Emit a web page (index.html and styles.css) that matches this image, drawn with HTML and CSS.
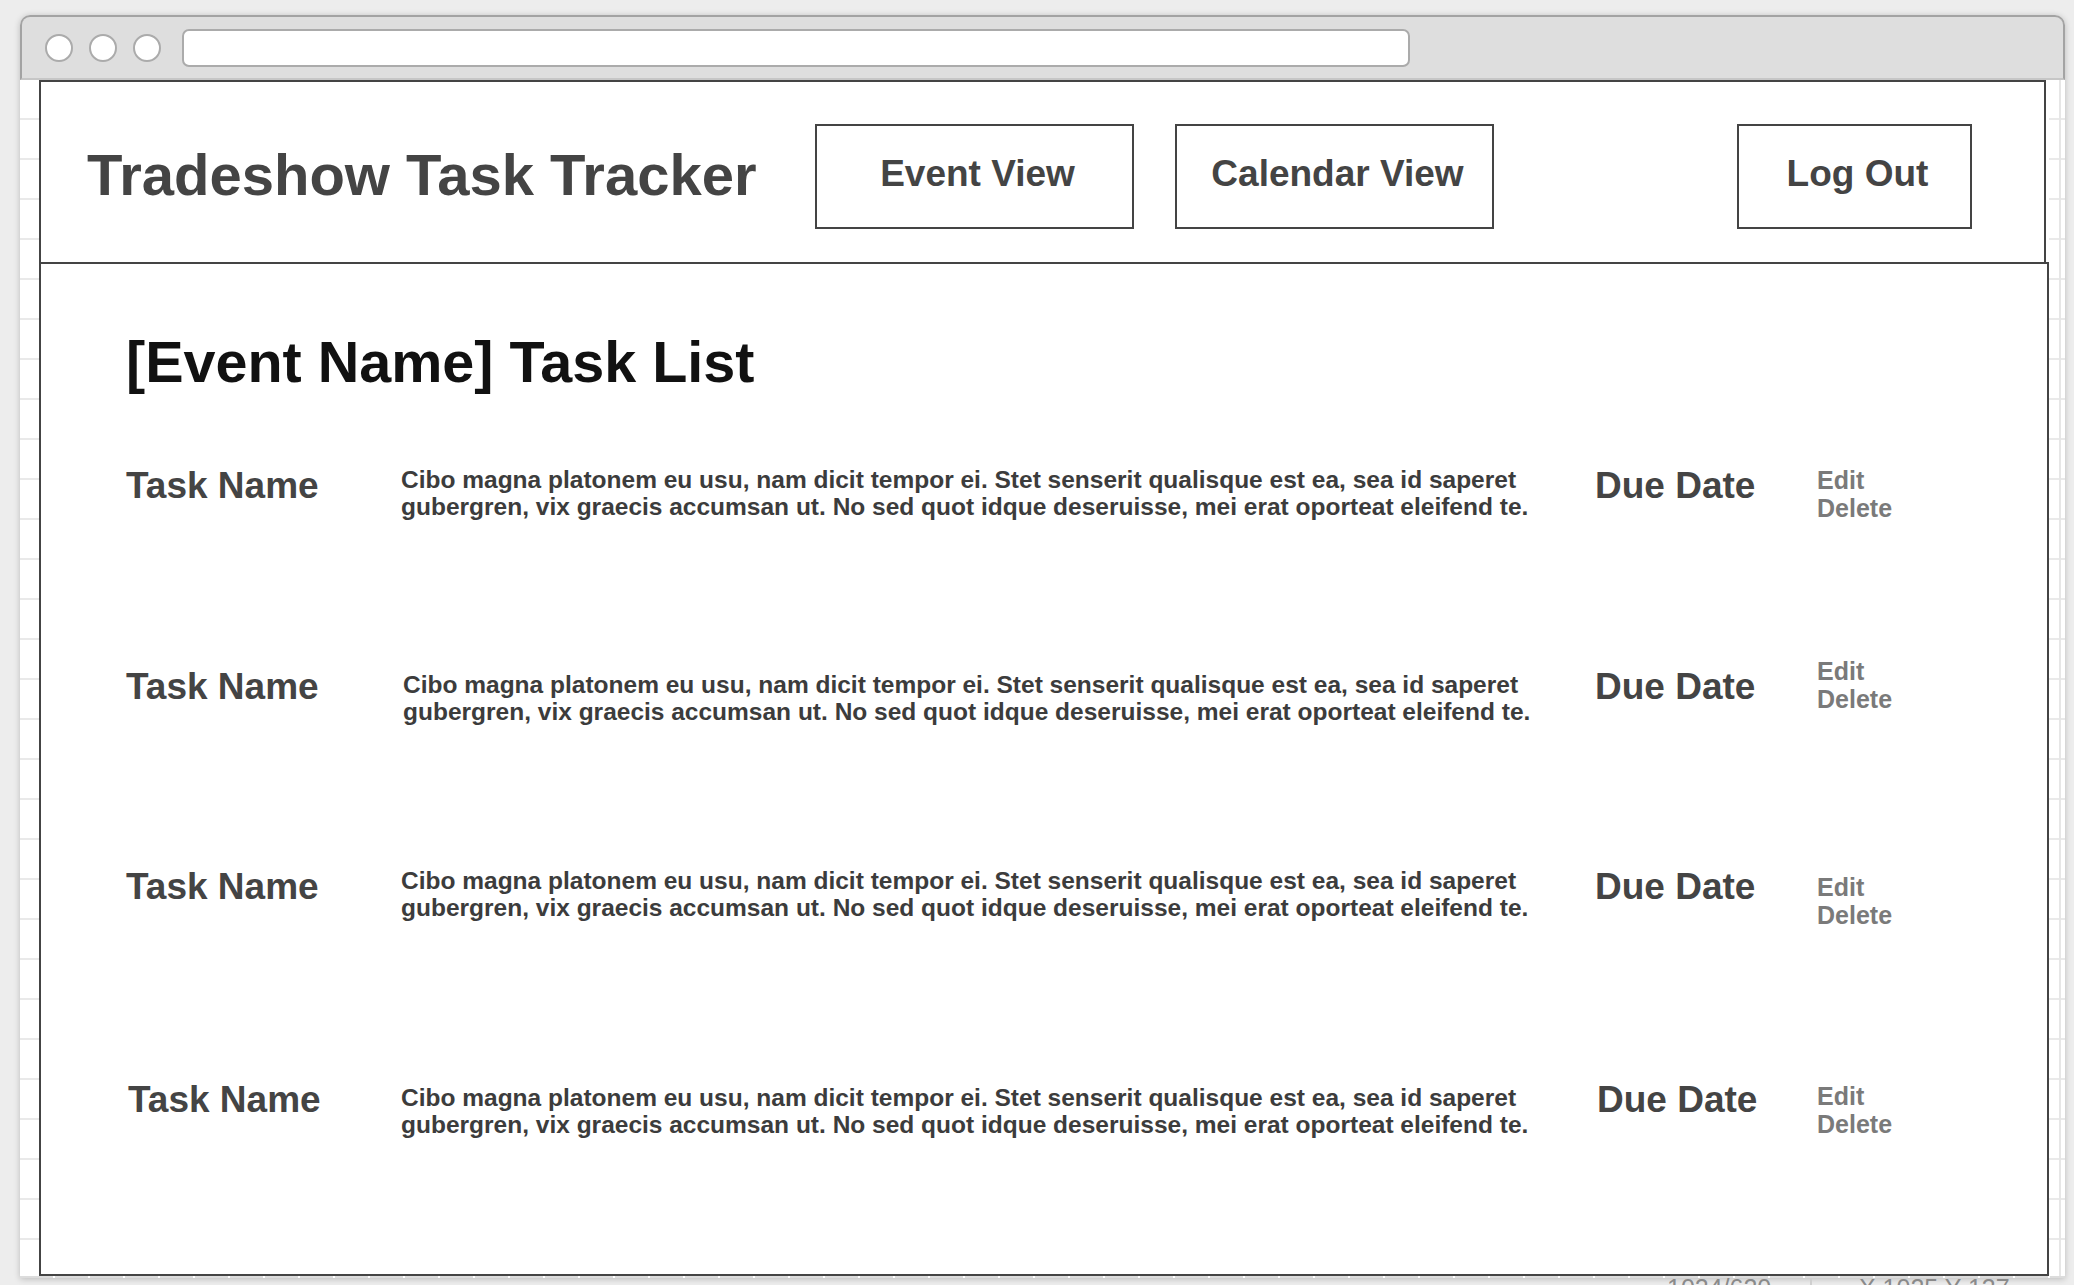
FILE: index.html
```html
<!DOCTYPE html>
<html lang="en">
<head>
<meta charset="utf-8">
<title>Tradeshow Task Tracker</title>
<link rel="stylesheet" href="styles.css">
</head>
<body>
<div class="window">
  <div class="titlebar">
    <span class="dot"></span>
    <span class="dot"></span>
    <span class="dot"></span>
    <div class="urlbar"></div>
  </div>
  <div class="viewport">
    <div class="gutter gutter-left"></div>
    <div class="app">
      <header class="app-header">
        <h1 class="brand">Tradeshow Task Tracker</h1>
        <nav class="nav">
          <a class="btn btn-view">Event View</a>
          <a class="btn btn-view btn-calendar">Calendar View</a>
        </nav>
        <a class="btn btn-logout">Log Out</a>
      </header>
      <main class="app-main">
        <h2 class="page-title">[Event Name] Task List</h2>
        <ul class="tasks">
          <li class="task">
            <div class="task-name">Task Name</div>
            <p class="task-desc">Cibo magna platonem eu usu, nam dicit tempor ei. Stet senserit qualisque est ea, sea id saperet gubergren, vix graecis accumsan ut. No sed quot idque deseruisse, mei erat oporteat eleifend te.</p>
            <div class="task-due">Due Date</div>
            <div class="task-actions"><a>Edit</a><a>Delete</a></div>
          </li>
          <li class="task">
            <div class="task-name">Task Name</div>
            <p class="task-desc">Cibo magna platonem eu usu, nam dicit tempor ei. Stet senserit qualisque est ea, sea id saperet gubergren, vix graecis accumsan ut. No sed quot idque deseruisse, mei erat oporteat eleifend te.</p>
            <div class="task-due">Due Date</div>
            <div class="task-actions"><a>Edit</a><a>Delete</a></div>
          </li>
          <li class="task">
            <div class="task-name">Task Name</div>
            <p class="task-desc">Cibo magna platonem eu usu, nam dicit tempor ei. Stet senserit qualisque est ea, sea id saperet gubergren, vix graecis accumsan ut. No sed quot idque deseruisse, mei erat oporteat eleifend te.</p>
            <div class="task-due">Due Date</div>
            <div class="task-actions"><a>Edit</a><a>Delete</a></div>
          </li>
          <li class="task">
            <div class="task-name">Task Name</div>
            <p class="task-desc">Cibo magna platonem eu usu, nam dicit tempor ei. Stet senserit qualisque est ea, sea id saperet gubergren, vix graecis accumsan ut. No sed quot idque deseruisse, mei erat oporteat eleifend te.</p>
            <div class="task-due">Due Date</div>
            <div class="task-actions"><a>Edit</a><a>Delete</a></div>
          </li>
        </ul>
      </main>
    </div>
    <div class="gutter gutter-right"></div>
  </div>
  <div class="ruler"></div>
</div>
<div class="status">
  <span class="status-size">1024/620</span>
  <span class="status-pos">X 1025 Y 137</span>
</div>
</body>
</html>
```
FILE: styles.css
```css
* { box-sizing: border-box; }

html, body {
  margin: 0;
  padding: 0;
}

body {
  height: 1285px;
  overflow: hidden;
  background: #ededed;
  font-family: "Liberation Sans", Arial, sans-serif;
  padding-top: 15px;
}

.window {
  margin-left: 20px;
  width: 2045px;
  box-shadow: 0 1px 6px rgba(0, 0, 0, 0.22);
  background: #fff;
  border-radius: 10px 10px 0 0;
}

.titlebar {
  height: 65px;
  display: flex;
  align-items: center;
  background: #dedede;
  border: 2px solid #a3a3a3;
  border-bottom-color: #c6c6c6;
  border-radius: 10px 10px 0 0;
  padding-left: 23px;
}

.dot {
  width: 28px;
  height: 28px;
  border-radius: 50%;
  background: #fff;
  border: 2px solid #ababab;
  margin-right: 16px;
  flex: none;
}

.dot:nth-child(3) { margin-right: 21px; }

.urlbar {
  width: 1228px;
  height: 38px;
  background: #fff;
  border: 2px solid #ababab;
  border-radius: 7px;
}

.viewport {
  display: flex;
  height: 1196px;
}

.gutter {
  background-color: #fff;
  background-image: repeating-linear-gradient(to bottom, transparent 0 38px, #e9e9e9 38px 40px);
}

.gutter-left { width: 19px; flex: none; }

.gutter-right {
  width: 16px;
  flex: none;
  background-image:
    linear-gradient(to right, transparent 10px, #e6e6e6 10px 12px, transparent 12px),
    repeating-linear-gradient(to bottom, transparent 0 38px, #e9e9e9 38px 40px);
}

.app {
  width: 2010px;
  flex: none;
  display: flex;
  flex-direction: column;
}

.app-header {
  flex: none;
  height: 182px;
  margin-right: 3px;
  border: 2px solid #444;
  border-bottom: none;
  display: flex;
  align-items: flex-start;
  padding: 42px 72px 0 46px;
}

.brand {
  width: 728px;
  flex: none;
  margin: 22px 0 0;
  font-size: 58px;
  line-height: 57px;
  font-weight: bold;
  color: #444;
  white-space: nowrap;
}

.nav {
  display: flex;
}

.btn {
  display: flex;
  align-items: center;
  justify-content: center;
  height: 105px;
  border: 2px solid #444;
  font-size: 37px;
  font-weight: bold;
  color: #444;
  padding: 0 0 6px 6px;
  white-space: nowrap;
}

.btn-view { width: 319px; }
.btn-calendar { margin-left: 41px; }

.btn-logout {
  width: 235px;
  margin-left: auto;
}

.app-main {
  flex: 1;
  min-height: 0;
  overflow: hidden;
  border: 2px solid #444;
  padding: 70px 0 0 85px;
}

.page-title {
  margin: 0;
  font-size: 57.5px;
  line-height: 57px;
  font-weight: bold;
  color: #111;
}

.tasks {
  list-style: none;
  margin: 75px 0 0;
  padding: 0;
}

.task {
  display: grid;
  grid-template-columns: 275px 1194px 222px 1fr;
  align-items: start;
  height: 200px;
}

.task:nth-child(1) { height: 201px; }
.task:nth-child(2) { height: 200px; }
.task:nth-child(3) { height: 213px; }
.task:last-child { height: auto; }

.task-name,
.task-due {
  margin-top: 1px;
  font-size: 37px;
  line-height: 37px;
  font-weight: bold;
  color: #444;
}

.task-desc {
  margin: 0;
  font-size: 24.5px;
  line-height: 27px;
  font-weight: bold;
  color: #3c3c3c;
}

.task-actions {
  display: flex;
  flex-direction: column;
  font-size: 25px;
  line-height: 28px;
  font-weight: bold;
  color: #7a7a7a;
}

.task:nth-child(2) .task-desc { margin: 4px 0 0 2px; }
.task:nth-child(2) .task-actions { margin-top: -10px; }
.task:nth-child(3) .task-actions { margin-top: 6px; }
.task:nth-child(4) .task-desc { margin-top: 4px; }
.task:nth-child(4) .task-actions { margin-top: 2px; }
.task:nth-child(4) .task-name,
.task:nth-child(4) .task-due { margin-left: 2px; }

.ruler {
  height: 2px;
  background-color: #dcdcdc;
  background-image: repeating-linear-gradient(to right, #dcdcdc 0 33px, #fff 33px 35px);
}

.status {
  display: flex;
  padding-left: 1667px;
  font-size: 25px;
  line-height: 20px;
  color: #8a8a8a;
}

.status-size {
  width: 143px;
}

.status-pos {
  border-left: 2px solid #cfcfcf;
  padding-left: 47px;
  height: 20px;
}
```
